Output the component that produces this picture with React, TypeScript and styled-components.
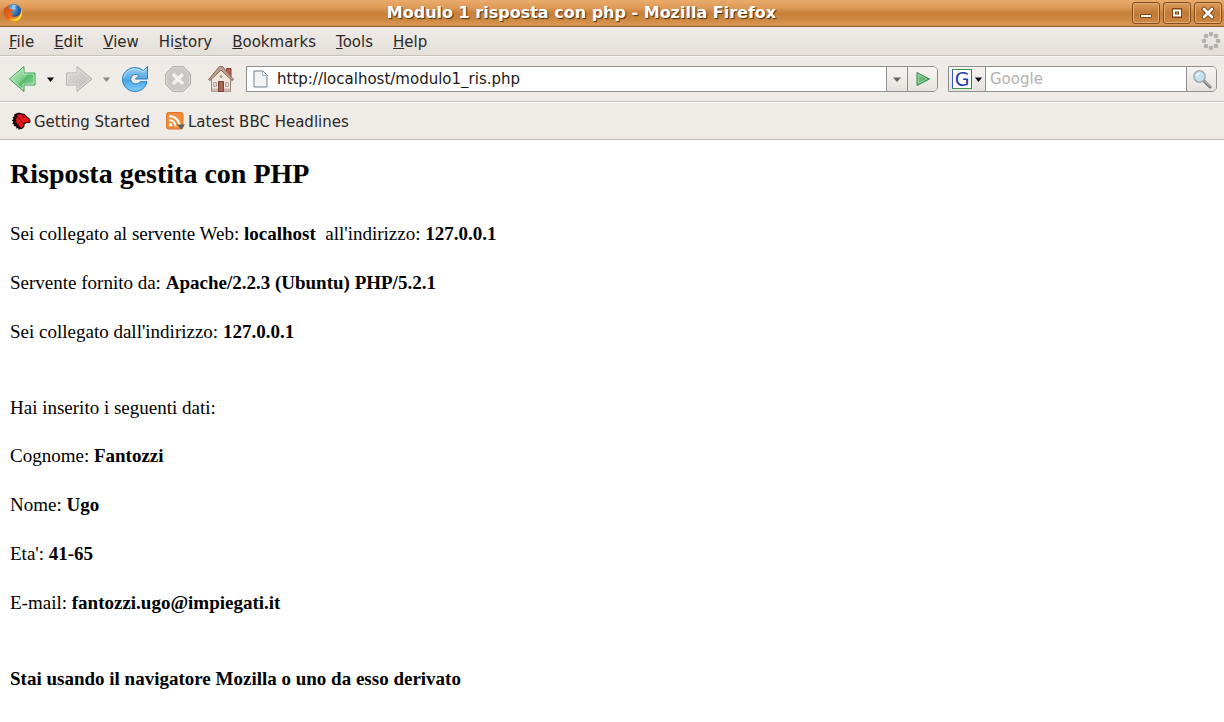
import React from "react";
import styled, { createGlobalStyle } from "styled-components";

const GlobalStyle = createGlobalStyle`
  * { box-sizing: border-box; }
  body {
    margin: 0;
    background: #fff;
    font-family: "DejaVu Sans", sans-serif;
    font-size: 15px;
    color: #2b2a28;
  }
  button, input {
    font: inherit;
    color: inherit;
    margin: 0;
    padding: 0;
    border: 0;
    background: none;
  }
  svg { display: block; flex: none; }
`;

const TitleBar = styled.header`
  display: flex;
  align-items: center;
  height: 27px;
  padding: 0 2px 1px 3px;
  background: linear-gradient(#e9ab6c 0, #dd9956 8px, #c8803a 13px, #cc8741 19px, #d99550 24px);
  border-bottom: 1px solid #8c5f33;
`;

const WindowTitle = styled.h1`
  flex: 1;
  margin: 0;
  padding-left: 8px;
  font-size: 16px;
  line-height: 24px;
  font-weight: bold;
  text-align: center;
  color: #fff;
  text-shadow: 1px 1px 1px #4b2f12;
`;

const WindowButtons = styled.div`
  display: flex;
  gap: 3px;
`;

const WindowButton = styled.button`
  display: flex;
  align-items: center;
  justify-content: center;
  width: 28px;
  height: 22px;
  border: 1px solid #844f1c;
  border-radius: 3px;
  background: linear-gradient(#dd9c5c, #c17a36 50%, #cd8843);
  box-shadow: inset 0 0 0 1px #e3ac75;
`;

const MenuBar = styled.nav`
  display: flex;
  align-items: center;
  gap: 20px;
  height: 29px;
  padding: 0 3px 0 9px;
  background: linear-gradient(#efebe7, #e4dfd9);
  border-bottom: 1px solid #c9c3bc;
`;

const MenuButton = styled.button`
  padding-top: 2px;
  line-height: 20px;
`;

const Throbber = styled.svg`
  margin-left: auto;
`;

const ToolBar = styled.div`
  display: flex;
  align-items: center;
  height: 46px;
  padding: 0 7px 0 8px;
  background: #efebe7;
  border-top: 1px solid #faf9f7;
  border-bottom: 1px solid #cbc6c0;
`;

const IconButton = styled.button<{ $gap: number }>`
  display: flex;
  margin-right: ${(p) => p.$gap}px;
`;

const Field = styled.form<{ $basis?: number }>`
  display: flex;
  flex: ${(p) => (p.$basis ? `0 0 ${p.$basis}px` : "1")};
  min-width: 0;
  height: 26px;
  border: 1px solid #8f8f91;
  border-radius: 0 5px 5px 0;
  background: #fff;
  overflow: hidden;
`;

const AddressField = styled(Field)`
  margin: 0 10px 0 11px;
`;

const PageIcon = styled.span`
  display: flex;
  align-items: center;
  padding: 0 9px 0 6px;
`;

const TextInput = styled.input`
  flex: 1;
  min-width: 0;
  outline: none;
  color: #1a1a1a;
  &::placeholder { color: #b4b2b0; opacity: 1; }
`;

const FieldButton = styled.button<{ $width: number; $side: "left" | "right" }>`
  display: flex;
  align-items: center;
  justify-content: center;
  gap: 3px;
  flex: 0 0 ${(p) => p.$width}px;
  background: linear-gradient(#f6f4f2, #e6e2dd);
  border-${(p) => p.$side}: 1px solid #8f8f91;
`;

const EngineLogo = styled.span`
  width: 20px;
  height: 20px;
  border: 1px solid;
  border-color: #3f9b46 #d8352c #3f9b46 #3459c4;
  background: #fff;
  color: #1f3fb0;
  font-size: 19px;
  line-height: 18px;
  text-align: center;
`;

const SearchInput = styled(TextInput)`
  padding-left: 4px;
`;

const BookmarkBar = styled.nav`
  display: flex;
  align-items: center;
  gap: 16px;
  height: 38px;
  padding: 0 11px;
  background: #efebe7;
  border-top: 1px solid #fff;
  border-bottom: 1px solid #c0bbb5;
`;

const Bookmark = styled.a`
  display: flex;
  align-items: center;
  gap: 3px;
  line-height: 20px;
  color: inherit;
  text-decoration: none;
`;

const BookmarkLabel = styled.span`
  padding-top: 2px;
`;

const Page = styled.main`
  padding: 16px 10px;
  font-family: "Liberation Serif", serif;
  font-size: 19px;
  line-height: 22px;
  color: #000;
`;

const Heading = styled.h2`
  margin: 0 0 31px;
  font-size: 28px;
  line-height: 36px;
`;

const Group = styled.section`
  margin-bottom: 54px;
`;

const Line = styled.p`
  margin: 0 0 27px;
  &:last-child { margin-bottom: 0; }
`;

const IntroLine = styled(Line)`
  margin-bottom: 26px;
`;

const FirefoxIcon = () => (
  <svg width="20" height="20" viewBox="0 0 20 20">
    <defs>
      <radialGradient id="globe" cx="0.4" cy="0.3" r="0.8">
        <stop offset="0" stopColor="#6fb4e8" />
        <stop offset="0.6" stopColor="#1f5ea8" />
        <stop offset="1" stopColor="#0c2f6b" />
      </radialGradient>
      <linearGradient id="fox" x1="0" y1="0" x2="1" y2="1">
        <stop offset="0" stopColor="#c5501a" />
        <stop offset="0.5" stopColor="#e8681c" />
        <stop offset="1" stopColor="#f9c32c" />
      </linearGradient>
    </defs>
    <circle cx="10.5" cy="9" r="8" fill="url(#globe)" />
    <path d="M9 2c2-.6 4 0 5 1l-2 1 1 2-2 1-2-1z" fill="#9fd4f3" opacity=".8" />
    <path d="M1.2 4.6C.2 8.5.3 12.8 3.4 16c3.6 3.6 9.8 3.7 13.2.2 2.9-3 3.4-7.6 1.400-11.200.4 3.500-.6 6.300-2.700 7.700-2.600 1.800-5.500 1.300-7-.5 1.300.2 2.400-.3 3.200-1.200-1.800 0-3.200-.6-3.400-2 .5-.9 1.500-.9 2.300-1.500-1-1-2.300-1.600-4-1.400C5.300 4.800 5.400 3.400 6 2.200 4.500 2.600 3.500 3.400 2.800 4.700z" fill="url(#fox)" />
    <path d="M18 5c1 4-.3 8-3.500 10-2.500 1.600-6 1.500-8 .5 2.500 3 7.500 3 10.100.7 2.900-3 3.400-7.600 1.400-11.200z" fill="#fbd93b" />
  </svg>
);

const BackIcon = () => (
  <svg width="28" height="28" viewBox="0 0 28 28">
    <defs>
      <linearGradient id="back" x1="0" y1="0" x2="1" y2="1">
        <stop offset="0" stopColor="#c6f0c8" />
        <stop offset="0.5" stopColor="#7fd08c" />
        <stop offset="0.55" stopColor="#57b86c" />
        <stop offset="1" stopColor="#a5e3a0" />
      </linearGradient>
    </defs>
    <path d="M1.500 14 16 1.500V8h11v12H16v6.500z" fill="url(#back)" stroke="#3f9d5c" strokeLinejoin="round" />
    <path d="M3.300 14 15 3.700V9h11v10H15v5.300z" fill="none" stroke="#d3f5d2" strokeOpacity=".7" />
  </svg>
);

const ForwardIcon = () => (
  <svg width="28" height="28" viewBox="0 0 28 28">
    <defs>
      <linearGradient id="forward" x1="0" y1="0" x2="1" y2="1">
        <stop offset="0" stopColor="#dddbd9" />
        <stop offset="1" stopColor="#bdbbb9" />
      </linearGradient>
    </defs>
    <path d="M27 14 12 1.500V8H1.500v12H12v6.500z" fill="url(#forward)" stroke="#b3b1af" strokeLinejoin="round" />
    <path d="M25.200 14 13 3.700V9H2.500v10H13v5.300z" fill="none" stroke="#e6e4e2" strokeOpacity=".8" />
  </svg>
);

const ReloadIcon = () => (
  <svg width="28" height="28" viewBox="0 0 28 28">
    <defs>
      <linearGradient id="reload" x1="0" y1="0" x2="0" y2="1">
        <stop offset="0" stopColor="#9fd3f6" />
        <stop offset="0.55" stopColor="#4ba3e2" />
        <stop offset="1" stopColor="#7fd0fa" />
      </linearGradient>
    </defs>
    <path
      d="M26.500 1.500V14H14.500l3.600-3.600C14 8 9.800 10.500 9.800 14.300c0 4.900 6.700 6.300 9.200 2.400h7C24.800 22.500 20 26.500 14 26.500 7 26.500 1.500 21 1.500 14.300 1.500 4.500 14-1.500 22.500 5.800z"
      fill="url(#reload)"
      stroke="#2f7fc0"
      strokeLinejoin="round"
    />
    <path d="M3 13C4 5 14 .8 22 7.200L25 4" fill="none" stroke="#c8e7fb" strokeOpacity=".8" />
  </svg>
);

const StopIcon = () => (
  <svg width="28" height="28" viewBox="0 0 28 28">
    <path d="M8.800 1.500h10.400l7.300 7.300v10.400l-7.300 7.300H8.800l-7.300-7.300V8.800z" fill="#c9c7c5" stroke="#b3b1af" />
    <path d="M9.300 2.700h9.400l6.600 6.600v9.400l-6.600 6.600H9.300l-6.600-6.600V9.300z" fill="none" stroke="#d9d7d5" />
    <path d="m9 9 10 10M19 9 9 19" stroke="#f4f2f0" strokeWidth="3.400" />
  </svg>
);

const HomeIcon = () => (
  <svg width="28" height="28" viewBox="0 0 28 28">
    <path d="M19.500 3.500h4.500v9h-4.500z" fill="#c8564c" stroke="#8b3f37" />
    <path d="M4.500 13 14 4l9.500 9v13.500h-19z" fill="#f1e6dc" stroke="#a08876" />
    <path d="M5 23.500h18v3H5z" fill="#cbb9aa" />
    <path d="M1.500 14.500 12.500 1.500h3l11 13-1.500 1L14 5 3 15.500z" fill="#c0a08f" stroke="#86695a" strokeLinejoin="round" />
    <path d="M11.500 16.500h5v10h-5z" fill="#a9634e" stroke="#76443a" />
    <path d="M6.500 17.500h3v4h-3zM18.500 17.500h3v4h-3z" fill="#d8d6dc" stroke="#b7a99d" />
    <circle cx="14" cy="11.500" r="1.500" fill="#b99f8d" />
  </svg>
);

const Caret = ({ color, size = 7 }: { color: string; size?: number }) => (
  <svg width={size} height="5" viewBox="0 0 8 5" preserveAspectRatio="none">
    <path d="M0 .5h8L4 5z" fill={color} />
  </svg>
);

const DocumentIcon = () => (
  <svg width="15" height="18" viewBox="0 0 15 18">
    <path d="M1 1h9l4 4v12H1z" fill="#f2f4f5" stroke="#71828f" />
    <path d="M9.500 1v4.500H14" fill="#fff" stroke="#a3b0b9" />
  </svg>
);

const GoIcon = () => (
  <svg width="16" height="16" viewBox="0 0 16 16">
    <defs>
      <linearGradient id="go" x1="0" y1="0" x2="1" y2="0.6">
        <stop offset="0" stopColor="#8ed19a" />
        <stop offset="1" stopColor="#3f9d58" />
      </linearGradient>
    </defs>
    <path d="M2 1.500 14.500 8 2 14.500z" fill="url(#go)" stroke="#358a4b" strokeLinejoin="round" />
    <path d="M3.300 3.500 12 8 3.300 12.500z" fill="none" stroke="#b4e3ba" strokeOpacity=".6" />
  </svg>
);

const SearchIcon = () => (
  <svg width="20" height="20" viewBox="0 0 20 20">
    <path d="m11.500 11.500 6.500 6.500" stroke="#77797a" strokeWidth="3" strokeLinecap="round" />
    <path d="m12 11.500 6 6" stroke="#d6d8d8" strokeWidth="1" strokeLinecap="round" />
    <circle cx="7.500" cy="7.500" r="5.700" fill="#c6e2ee" stroke="#a2aaae" strokeWidth="1.500" />
    <path d="M4 7.500C4 5 6 3.700 8.500 4 7 5 5.500 6 4 7.500z" fill="#fff" />
  </svg>
);

const DragonIcon = () => (
  <svg width="20" height="18" viewBox="0 0 20 18">
    <path
      d="M5 1.500 8 .5l3 1 3 .5 1.500 2 3 2.500 1.200 3-1.200 1.700-2.700-.2-2 .8-.5 3L11 17l-4 .5.500-1.500-2.500.5.500-2-3-.5 1-1.500-2.300-.5L2.500 10 .8 8.500 2.500 7 1.500 5 3.500 4.500 3 2.800z"
      fill="#120304"
    />
    <path
      d="M6 3 9 2l1.500 1.200 3-.2 1.500 2 3 2.300.7 2.200-1 .9-2.700-.6-2.500 1.500-.8 3.500-2 1.500L9 14l-1.500 1 .3-3L6 13l.3-2.500-2.500.5 2-2.500L3.500 8l2.500-1L4.500 5.500l2.500.3z"
      fill="#e8141b"
    />
    <path d="m11.500 4.500 2 1M10 9l1.500 2M8 6l1 1.500" stroke="#120304" />
  </svg>
);

const FeedIcon = () => (
  <svg width="19" height="18" viewBox="0 0 19 18">
    <rect x=".5" y=".5" width="16.500" height="16.500" rx="2" fill="#f28c38" stroke="#d9752a" />
    <circle cx="4.700" cy="12.800" r="1.700" fill="#fff" />
    <path d="M3 8c3.600 0 6.500 2.700 6.500 6.500M3 4c6 0 10.500 4.500 10.500 10.500" fill="none" stroke="#fff" strokeWidth="2" />
    <path d="M11 12.500h8l-4 5z" fill="#5c5d60" />
  </svg>
);

const dots = [
  [10, 3], [15, 5], [17, 10], [15, 15], [10, 17], [5, 15], [3, 10], [5, 5],
];

const menus: [string, string, string][] = [
  ["", "F", "ile"],
  ["", "E", "dit"],
  ["", "V", "iew"],
  ["Hi", "s", "tory"],
  ["", "B", "ookmarks"],
  ["", "T", "ools"],
  ["", "H", "elp"],
];

const fields: [string, string][] = [
  ["Cognome:", "Fantozzi"],
  ["Nome:", "Ugo"],
  ["Eta':", "41-65"],
  ["E-mail:", "fantozzi.ugo@impiegati.it"],
];

export default function App() {
  return (
    <>
      <GlobalStyle />
      <TitleBar>
        <FirefoxIcon />
        <WindowTitle>Modulo 1 risposta con php - Mozilla Firefox</WindowTitle>
        <WindowButtons>
          <WindowButton aria-label="Minimize">
            <svg width="14" height="12" viewBox="0 0 14 12">
              <path d="M1.500 7.500h11v3h-11z" fill="#fff" stroke="#7a4515" />
            </svg>
          </WindowButton>
          <WindowButton aria-label="Maximize">
            <svg width="12" height="12" viewBox="0 0 12 12">
              <path d="M3 3h6v6H3z" fill="none" stroke="#7a4515" strokeWidth="4" />
              <path d="M3 3.500h6v5H3z" fill="none" stroke="#fff" strokeWidth="2" />
            </svg>
          </WindowButton>
          <WindowButton aria-label="Close">
            <svg width="14" height="14" viewBox="0 0 14 14">
              <path d="m3 3 8 8M11 3l-8 8" stroke="#7a4515" strokeWidth="4.500" strokeLinecap="round" />
              <path d="m3 3 8 8M11 3l-8 8" stroke="#fff" strokeWidth="2.600" strokeLinecap="round" />
            </svg>
          </WindowButton>
        </WindowButtons>
      </TitleBar>
      <MenuBar aria-label="Menu">
        {menus.map(([before, key, after]) => (
          <MenuButton key={after}>
            {before}
            <u>{key}</u>
            {after}
          </MenuButton>
        ))}
        <Throbber width="20" height="20" viewBox="0 0 20 20">
          {dots.map(([x, y]) => (
            <circle key={`${x}-${y}`} cx={x} cy={y} r="2.300" fill="#b3b0ad" />
          ))}
        </Throbber>
      </MenuBar>
      <ToolBar>
        <IconButton $gap={11} aria-label="Back"><BackIcon /></IconButton>
        <IconButton $gap={11} aria-label="Back history"><Caret color="#000" /></IconButton>
        <IconButton $gap={10} aria-label="Forward"><ForwardIcon /></IconButton>
        <IconButton $gap={11} aria-label="Forward history"><Caret color="#8a8784" /></IconButton>
        <IconButton $gap={15} aria-label="Reload"><ReloadIcon /></IconButton>
        <IconButton $gap={15} aria-label="Stop" disabled><StopIcon /></IconButton>
        <IconButton $gap={0} aria-label="Home"><HomeIcon /></IconButton>
        <AddressField onSubmit={(e) => e.preventDefault()}>
          <PageIcon><DocumentIcon /></PageIcon>
          <TextInput aria-label="Address" defaultValue="http://localhost/modulo1_ris.php" />
          <FieldButton type="button" $width={21} $side="left" aria-label="Show history">
            <Caret color="#666" size={8} />
          </FieldButton>
          <FieldButton $width={30} $side="left" aria-label="Go"><GoIcon /></FieldButton>
        </AddressField>
        <Field $basis={269} onSubmit={(e) => e.preventDefault()}>
          <FieldButton type="button" $width={37} $side="right" aria-label="Search engine">
            <EngineLogo>G</EngineLogo>
            <Caret color="#000" />
          </FieldButton>
          <SearchInput aria-label="Search" placeholder="Google" />
          <FieldButton $width={30} $side="left" aria-label="Search"><SearchIcon /></FieldButton>
        </Field>
      </ToolBar>
      <BookmarkBar aria-label="Bookmarks">
        <Bookmark href="#">
          <DragonIcon />
          <BookmarkLabel>Getting Started</BookmarkLabel>
        </Bookmark>
        <Bookmark href="#">
          <FeedIcon />
          <BookmarkLabel>Latest BBC Headlines</BookmarkLabel>
        </Bookmark>
      </BookmarkBar>
      <Page>
        <Heading>Risposta gestita con PHP</Heading>
        <Group>
          <Line>
            Sei collegato al servente Web: <b>localhost</b>&nbsp; all'indirizzo: <b>127.0.0.1</b>
          </Line>
          <Line>Servente fornito da: <b>Apache/2.2.3 (Ubuntu) PHP/5.2.1</b></Line>
          <Line>Sei collegato dall'indirizzo: <b>127.0.0.1</b></Line>
        </Group>
        <Group>
          <IntroLine>Hai inserito i seguenti dati:</IntroLine>
          {fields.map(([label, value]) => (
            <Line key={label}>{label} <b>{value}</b></Line>
          ))}
        </Group>
        <Line><b>Stai usando il navigatore Mozilla o uno da esso derivato</b></Line>
      </Page>
    </>
  );
}
